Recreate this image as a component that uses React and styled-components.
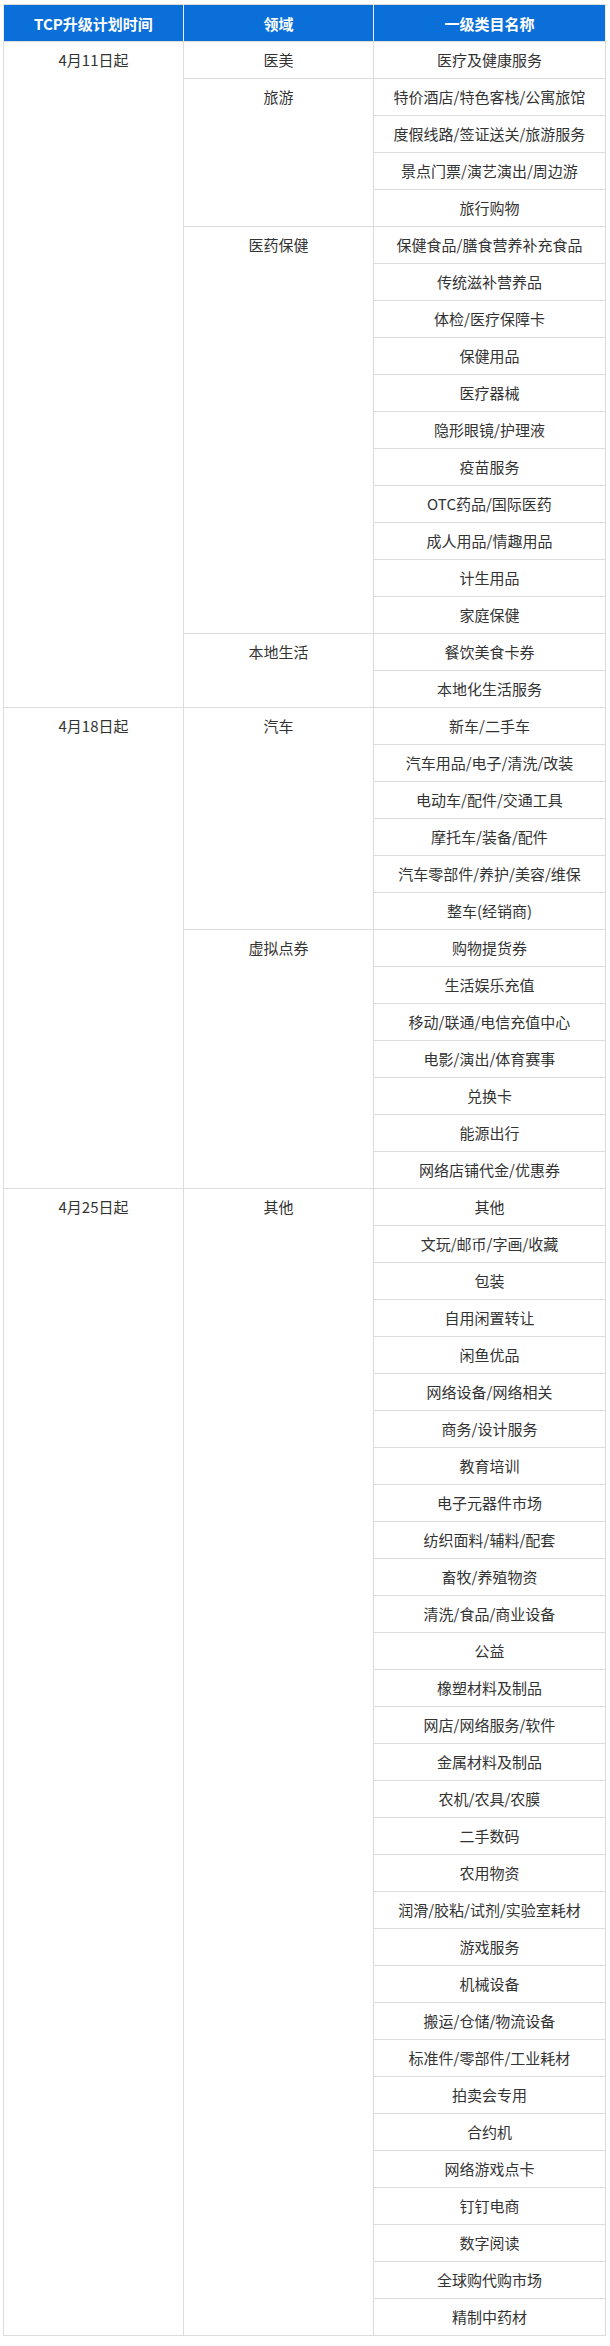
import React from "react"
import styled, { createGlobalStyle } from "styled-components"

const GlobalStyle = createGlobalStyle`
    body {
        margin: 0;
        background: #fff;
        font-family: "Noto Sans CJK SC", "Liberation Sans", sans-serif;
    }
`

const Page = styled.div`
    padding: 4px 5px 5px 3px;
`

const Table = styled.table`
    width: 602px;
    border-collapse: collapse;
    table-layout: fixed;
    font-size: 15px;
    color: #333;
`

const Col = styled.col`
    width: ${props => props.w}px;
`

const HeadCell = styled.th`
    height: 36px;
    padding: 0 4px;
    background: #0b6fd9;
    color: #fff;
    font-weight: bold;
    font-size: 15px;
    text-align: center;
    border: 1px solid #dcdcdc;
    border-left-color: #e8eef8;
    border-right-color: #e8eef8;
`

const Cell = styled.td`
    padding: 8px 4px;
    line-height: 20px;
    text-align: center;
    vertical-align: top;
    border: 1px solid #dcdcdc;
    white-space: nowrap;
`

const data = [
    {
        date: "4月11日起",
        fields: [
            { name: "医美", items: ["医疗及健康服务"] },
            { name: "旅游", items: ["特价酒店/特色客栈/公寓旅馆", "度假线路/签证送关/旅游服务", "景点门票/演艺演出/周边游", "旅行购物"] },
            { name: "医药保健", items: ["保健食品/膳食营养补充食品", "传统滋补营养品", "体检/医疗保障卡", "保健用品", "医疗器械", "隐形眼镜/护理液", "疫苗服务", "OTC药品/国际医药", "成人用品/情趣用品", "计生用品", "家庭保健"] },
            { name: "本地生活", items: ["餐饮美食卡券", "本地化生活服务"] },
        ],
    },
    {
        date: "4月18日起",
        fields: [
            { name: "汽车", items: ["新车/二手车", "汽车用品/电子/清洗/改装", "电动车/配件/交通工具", "摩托车/装备/配件", "汽车零部件/养护/美容/维保", "整车(经销商)"] },
            { name: "虚拟点券", items: ["购物提货券", "生活娱乐充值", "移动/联通/电信充值中心", "电影/演出/体育赛事", "兑换卡", "能源出行", "网络店铺代金/优惠券"] },
        ],
    },
    {
        date: "4月25日起",
        fields: [
            { name: "其他", items: ["其他", "文玩/邮币/字画/收藏", "包装", "自用闲置转让", "闲鱼优品", "网络设备/网络相关", "商务/设计服务", "教育培训", "电子元器件市场", "纺织面料/辅料/配套", "畜牧/养殖物资", "清洗/食品/商业设备", "公益", "橡塑材料及制品", "网店/网络服务/软件", "金属材料及制品", "农机/农具/农膜", "二手数码", "农用物资", "润滑/胶粘/试剂/实验室耗材", "游戏服务", "机械设备", "搬运/仓储/物流设备", "标准件/零部件/工业耗材", "拍卖会专用", "合约机", "网络游戏点卡", "钉钉电商", "数字阅读", "全球购代购市场", "精制中药材"] },
        ],
    },
]

const App = () => {
    const rows = []
    data.forEach(group => {
        const groupSpan = group.fields.reduce((n, f) => n + f.items.length, 0)
        group.fields.forEach((field, fi) => {
            field.items.forEach((item, ii) => {
                rows.push(
                    <tr key={`${group.date}-${field.name}-${ii}`}>
                        {fi === 0 && ii === 0 && <Cell rowSpan={groupSpan}>{group.date}</Cell>}
                        {ii === 0 && <Cell rowSpan={field.items.length}>{field.name}</Cell>}
                        <Cell>{item}</Cell>
                    </tr>
                )
            })
        })
    })

    return (
        <Page>
            <GlobalStyle />
            <Table>
                <colgroup>
                    <Col w={180} />
                    <Col w={190} />
                    <Col w={232} />
                </colgroup>
                <thead>
                    <tr>
                        <HeadCell>TCP升级计划时间</HeadCell>
                        <HeadCell>领域</HeadCell>
                        <HeadCell>一级类目名称</HeadCell>
                    </tr>
                </thead>
                <tbody>{rows}</tbody>
            </Table>
        </Page>
    )
}

export default App
